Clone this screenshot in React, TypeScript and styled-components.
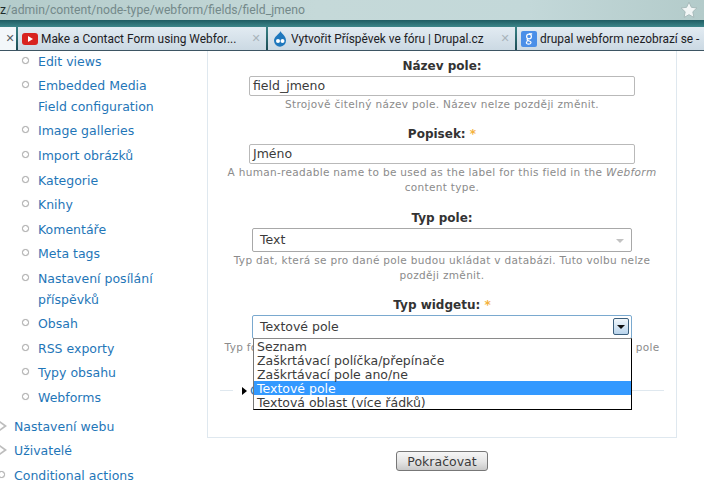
import React from 'react';
import styled, { createGlobalStyle } from 'styled-components';

const GlobalStyle = createGlobalStyle`
  html, body {
    margin: 0;
    padding: 0;
    background: #fff;
    overflow: hidden;
  }
  body {
    font-family: "DejaVu Sans", Verdana, sans-serif;
  }
`;

const Screen = styled.div`
  width: 704px;
  height: 485px;
  overflow: hidden;
  display: flex;
  flex-direction: column;
`;

const AddressBar = styled.div`
  height: 20px;
  flex: none;
  display: flex;
  align-items: center;
  justify-content: space-between;
  padding-right: 6px;
  background: linear-gradient(90deg, #b4cccb 0%, #c5d9d9 45%, #c3d8d9 75%, #b3cbca 100%);
  font-family: Roboto, "Liberation Sans", sans-serif;
  font-size: 12.2px;
  color: #74898a;
  b {
    font-weight: 400;
    color: #1c2a2b;
  }
`;

const TabStrip = styled.div`
  height: 31px;
  flex: none;
  display: flex;
  align-items: flex-end;
  gap: 2px;
  box-sizing: border-box;
  padding-top: 7px;
  background: linear-gradient(180deg, #1f5c63 0%, #3a8387 22%, #2a6a70 60%, #1c4a53 100%);
  border-bottom: 1px solid #3d5563;
`;

const Tab = styled.div<{ $width: number; $active?: boolean }>`
  width: ${({ $width }) => $width}px;
  height: 23px;
  flex: none;
  box-sizing: border-box;
  display: flex;
  align-items: center;
  gap: 3px;
  padding: 0 4px;
  overflow: hidden;
  white-space: nowrap;
  background: ${({ $active }) => ($active ? '#f3f7fa' : 'linear-gradient(180deg, #e2ebf2 0%, #cbd9e3 100%)')};
  font-family: Roboto, "Liberation Sans", sans-serif;
  font-size: 11.9px;
  color: #1c2024;
`;

const TabTitle = styled.span`
  flex: 1;
  overflow: hidden;
`;

const TabClose = styled.span<{ $dark?: boolean }>`
  flex: none;
  width: 12px;
  text-align: center;
  font-size: 11px;
  font-family: "DejaVu Sans", sans-serif;
  color: ${({ $dark }) => ($dark ? '#5a6066' : '#a9b3ba')};
`;

const Body = styled.div`
  flex: 1;
  display: flex;
  min-height: 0;
`;

const Sidebar = styled.nav`
  width: 207px;
  flex: none;
  box-sizing: border-box;
  padding-top: 0.6px;
  font-size: 12.5px;
  line-height: 20.6px;
`;

const MenuList = styled.ul<{ $nested?: boolean }>`
  list-style: none;
  margin: 0 0 ${({ $nested }) => ($nested ? '8px' : '0')};
  padding: 0 ${({ $nested }) => ($nested ? '29px' : '0')} 0 ${({ $nested }) => ($nested ? '38px' : '14px')};
`;

const MenuItem = styled.li`
  position: relative;
  margin-bottom: 4px;
  color: #1f76b8;
  &::before {
    content: '';
    position: absolute;
    left: -16px;
    top: 5px;
    width: 5px;
    height: 5px;
    border: 1px solid #a8a8a8;
    border-radius: 50%;
    background: #fff;
    box-shadow: 0 0 1px #cfcfcf;
  }
`;

const ArrowItem = styled(MenuItem)`
  &::before {
    left: -14px;
    top: 4px;
    width: 0;
    height: 0;
    border: none;
    border-radius: 0;
    box-shadow: none;
    background: none;
    border-left: 7px solid #bdbdbd;
    border-top: 5px solid transparent;
    border-bottom: 5px solid transparent;
  }
  &::after {
    content: '';
    position: absolute;
    left: -14px;
    top: 6px;
    border-left: 4px solid #fff;
    border-top: 3px solid transparent;
    border-bottom: 3px solid transparent;
  }
`;

const Content = styled.div`
  width: 470px;
  flex: none;
  display: flex;
  flex-direction: column;
  align-items: center;
`;

const Panel = styled.div`
  position: relative;
  width: 100%;
  height: 387px;
  box-sizing: border-box;
  padding-top: 7px;
  border: 1px solid #dfe8ef;
  border-top: none;
  text-align: center;
`;

const Field = styled.div<{ $gap: number }>`
  margin-bottom: ${({ $gap }) => $gap}px;
`;

const Label = styled.div`
  font-size: 12px;
  font-weight: 700;
  line-height: 17px;
  color: #333;
  margin-bottom: 1px;
`;

const Required = styled.span`
  color: #f4b23c;
`;

const TextInput = styled.div`
  width: 386px;
  height: 20px;
  box-sizing: border-box;
  margin: 0 0 0 41px;
  padding: 0 3px;
  border: 1px solid #b9b9b9;
  border-radius: 2px;
  text-align: left;
  font-size: 12.5px;
  line-height: 18px;
  color: #3b3b3b;
`;

const Hint = styled.div`
  font-size: 10.5px;
  line-height: 15px;
  margin: 1px 12px 0;
  letter-spacing: 0.32px;
  color: #8b8b8b;
`;

const SelectBox = styled.div<{ $focus?: boolean }>`
  position: relative;
  width: 380px;
  height: 24px;
  box-sizing: border-box;
  margin: 0 0 0 44px;
  padding: 0 7px;
  border: 1px solid ${({ $focus }) => ($focus ? '#7aa9cf' : '#a8a8a8')};
  border-radius: 2px;
  text-align: left;
  font-size: 12.5px;
  line-height: 22px;
  color: #3b3b3b;
`;

const SelectCaret = styled.span`
  position: absolute;
  right: 7px;
  top: 10px;
  border-top: 4px solid #c2c2c2;
  border-left: 4px solid transparent;
  border-right: 4px solid transparent;
`;

const DropButton = styled.span`
  position: absolute;
  right: 2px;
  top: 2px;
  width: 16px;
  height: 17px;
  box-sizing: border-box;
  border: 1px solid #3b5f7d;
  border-radius: 2px;
  background: linear-gradient(180deg, #f2f7fb 0%, #b9d4ec 100%);
  &::after {
    content: '';
    position: absolute;
    left: 3px;
    top: 6px;
    border-top: 4px solid #111;
    border-left: 4px solid transparent;
    border-right: 4px solid transparent;
  }
`;

const Rule = styled.div`
  position: absolute;
  left: 12px;
  right: 12px;
  top: 339px;
  height: 1px;
  background: #dfe8ef;
`;

const Legend = styled.div`
  position: absolute;
  left: 25px;
  top: 332px;
  padding-left: 17px;
  background: #fff;
  font-size: 12.5px;
  line-height: 16px;
  color: #1f76b8;
  &::before {
    content: '';
    position: absolute;
    left: 9px;
    top: 4px;
    border-left: 5px solid #000;
    border-top: 4px solid transparent;
    border-bottom: 4px solid transparent;
  }
`;

const Dropdown = styled.ul`
  position: absolute;
  left: 45px;
  top: 287px;
  width: 379px;
  box-sizing: border-box;
  margin: 0;
  padding: 0;
  list-style: none;
  background: #fff;
  border: 1px solid #000;
  border-top-color: #8a8a8a;
  border-left-color: #777;
  text-align: left;
  font-size: 12.5px;
  color: #3b3b3b;
`;

const DropOption = styled.li<{ $selected?: boolean }>`
  height: 14px;
  line-height: 16px;
  padding-left: 3px;
  background: ${({ $selected }) => ($selected ? '#3399ff' : 'transparent')};
  color: ${({ $selected }) => ($selected ? '#fff' : '#3b3b3b')};
`;

const SubmitButton = styled.button`
  width: 92px;
  height: 20px;
  margin-top: 13px;
  padding: 0;
  border: 1px solid #777;
  border-radius: 3px;
  background: linear-gradient(180deg, #f6f6f6 0%, #e4e4e4 55%, #c9c9c9 100%);
  font-family: inherit;
  font-size: 12.5px;
  color: #3b3b3b;
`;

const nested = [
  'Edit views',
  'Embedded Media Field configuration',
  'Image galleries',
  'Import obrázků',
  'Kategorie',
  'Knihy',
  'Komentáře',
  'Meta tags',
  'Nastavení posílání příspěvků',
  'Obsah',
  'RSS exporty',
  'Typy obsahu',
  'Webforms',
];

const YouTubeIcon = () => (
  <svg width="16" height="12" viewBox="0 0 16 12">
    <rect width="16" height="12" rx="3" fill="#d8231f" />
    <path d="M6 3l5 3-5 3z" fill="#fff" />
  </svg>
);

const DrupalIcon = () => (
  <svg width="16" height="16" viewBox="0 0 16 16">
    <path d="M8.5 0c.5 2.5 5.5 4.5 5.5 9.5A6 6 0 0 1 2 9.800C2 5 7.500 3.500 8.500 0z" fill="#1f78bd" />
    <circle cx="6" cy="10" r="2" fill="#fff" />
    <circle cx="10.500" cy="10" r="2" fill="#fff" />
  </svg>
);

const GoogleIcon = () => (
  <svg width="16" height="16" viewBox="0 0 16 16">
    <rect width="16" height="16" rx="2" fill="#4a8fe8" />
    <circle cx="8" cy="5.500" r="2.400" fill="none" stroke="#fff" strokeWidth="1.200" />
    <path d="M11.200 2.800H8M7 7.800c-1.800 1-.6 1.700 1.200 2.200 3 .8 1.800 3.200-.6 3.200S4.500 11.400 6.500 10.200" fill="none" stroke="#fff" strokeWidth="1.200" />
  </svg>
);

const StarIcon = () => (
  <svg width="18" height="18" viewBox="0 0 24 24">
    <path
      d="M12 1.500l3.200 6.900 7.300.9-5.400 5.100 1.400 7.500L12 18.200l-6.500 3.700 1.400-7.500L1.500 9.300l7.300-.9z"
      fill="#f2f6f6"
      stroke="#a3b7b7"
      strokeWidth="1.200"
    />
  </svg>
);

const App = () => (
  <Screen>
    <GlobalStyle />
    <AddressBar>
      <span>
        <b>z</b>/admin/content/node-type/webform/fields/field_jmeno
      </span>
      <StarIcon />
    </AddressBar>
    <TabStrip>
      <Tab $width={16} $active>
        <TabClose $dark>✕</TabClose>
      </Tab>
      <Tab $width={248}>
        <YouTubeIcon />
        <TabTitle>Make a Contact Form using Webfor...</TabTitle>
        <TabClose>✕</TabClose>
      </Tab>
      <Tab $width={247}>
        <DrupalIcon />
        <TabTitle>Vytvořit Příspěvek ve fóru | Drupal.cz</TabTitle>
        <TabClose>✕</TabClose>
      </Tab>
      <Tab $width={187}>
        <GoogleIcon />
        <TabTitle>drupal webform nezobrazí se -</TabTitle>
      </Tab>
    </TabStrip>
    <Body>
      <Sidebar>
        <MenuList $nested>
          {nested.map((item) => (
            <MenuItem key={item}>{item}</MenuItem>
          ))}
        </MenuList>
        <MenuList>
          <ArrowItem>Nastavení webu</ArrowItem>
          <ArrowItem>Uživatelé</ArrowItem>
          <MenuItem>Conditional actions</MenuItem>
        </MenuList>
      </Sidebar>
      <Content>
        <Panel>
          <Field $gap={14}>
            <Label>Název pole:</Label>
            <TextInput>field_jmeno</TextInput>
            <Hint>Strojově čitelný název pole. Název nelze později změnit.</Hint>
          </Field>
          <Field $gap={15}>
            <Label>
              Popisek: <Required>*</Required>
            </Label>
            <TextInput>Jméno</TextInput>
            <Hint>
              A human-readable name to be used as the label for this field in the <em>Webform</em> content type.
            </Hint>
          </Field>
          <Field $gap={14}>
            <Label>Typ pole:</Label>
            <SelectBox>
              Text
              <SelectCaret />
            </SelectBox>
            <Hint>Typ dat, která se pro dané pole budou ukládat v databázi. Tuto volbu nelze později změnit.</Hint>
          </Field>
          <Field $gap={0}>
            <Label>
              Typ widgetu: <Required>*</Required>
            </Label>
            <SelectBox $focus>
              Textové pole
              <DropButton />
            </SelectBox>
            <Hint>Typ formulářového prvku, který bude použitý při úpravách obsahu tohoto pole</Hint>
          </Field>
          <Rule />
          <Legend>Conditional actions</Legend>
          <Dropdown>
            <DropOption>Seznam</DropOption>
            <DropOption>Zaškrtávací políčka/přepínače</DropOption>
            <DropOption>Zaškrtávací pole ano/ne</DropOption>
            <DropOption $selected>Textové pole</DropOption>
            <DropOption>Textová oblast (více řádků)</DropOption>
          </Dropdown>
        </Panel>
        <SubmitButton>Pokračovat</SubmitButton>
      </Content>
    </Body>
  </Screen>
);

export default App;
